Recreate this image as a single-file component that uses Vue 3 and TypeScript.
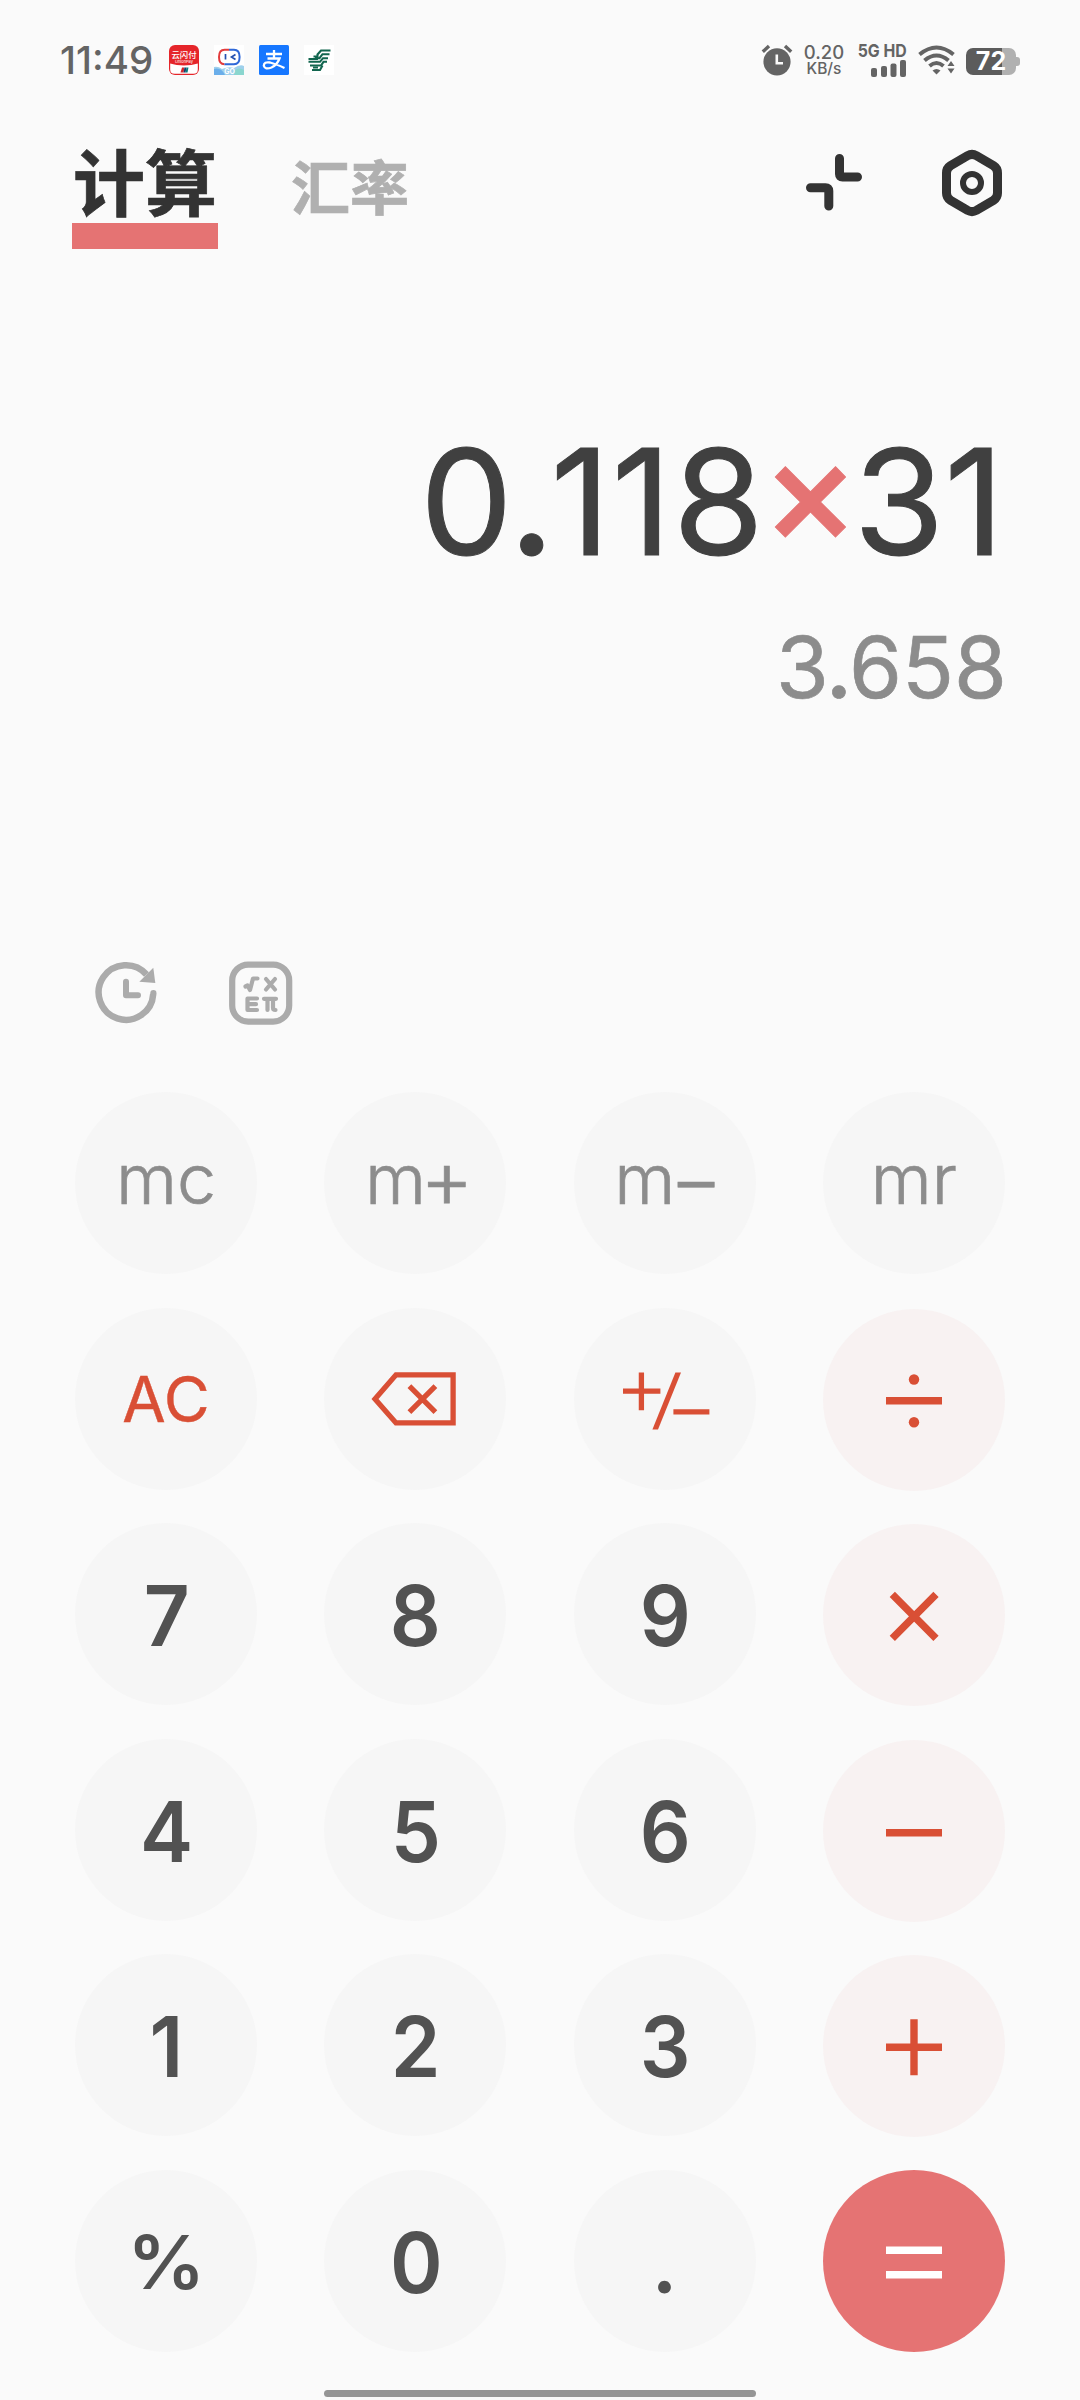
<script setup lang="ts">
type KeyKind = 'memory' | 'clear' | 'digit' | 'percent' | 'point' | 'icon'

interface Key {
  id: string
  kind: KeyKind
  label?: string
  sign?: string
  tone?: 'operator' | 'equals'
}

const keys: Key[] = [
  { id: 'mc', kind: 'memory', label: 'mc' },
  { id: 'm+', kind: 'memory', label: 'm', sign: '+' },
  { id: 'm-', kind: 'memory', label: 'm', sign: '−' },
  { id: 'mr', kind: 'memory', label: 'mr' },
  { id: 'ac', kind: 'clear', label: 'AC' },
  { id: 'backspace', kind: 'icon' },
  { id: 'sign', kind: 'icon' },
  { id: 'divide', kind: 'icon', tone: 'operator' },
  { id: '7', kind: 'digit', label: '7' },
  { id: '8', kind: 'digit', label: '8' },
  { id: '9', kind: 'digit', label: '9' },
  { id: 'multiply', kind: 'icon', tone: 'operator' },
  { id: '4', kind: 'digit', label: '4' },
  { id: '5', kind: 'digit', label: '5' },
  { id: '6', kind: 'digit', label: '6' },
  { id: 'minus', kind: 'icon', tone: 'operator' },
  { id: '1', kind: 'digit', label: '1' },
  { id: '2', kind: 'digit', label: '2' },
  { id: '3', kind: 'digit', label: '3' },
  { id: 'plus', kind: 'icon', tone: 'operator' },
  { id: 'percent', kind: 'percent', label: '%' },
  { id: '0', kind: 'digit', label: '0' },
  { id: 'point', kind: 'point', label: '.' },
  { id: 'equals', kind: 'icon', tone: 'equals' },
]

/* Stroke paths inside a 182 x 182 key */
const iconPaths: Record<string, string> = {
  backspace: 'M72 66.8H129.1V114.9H72L51 91ZM85.4 78.2L111.4 104.2M111.4 78.2L85.4 104.2',
  sign: 'M49 83.2H86.4M67.4 64.5V102.2M99.4 103.8H135.4',
  divide: 'M63 91.8H119',
  multiply: 'M69.3 70.4L113 114.4M113 70.4L69.3 114.4',
  minus: 'M63 92.7H119',
  plus: 'M63 92.3H119M91 64.3V120.3',
  equals: 'M63 80.2H119M63 104.8H119',
}
</script>

<template>
  <div class="phone">
    <header class="status">
      <span class="clock">11:49</span>
      <div class="apps">
        <svg width="30" height="30" viewBox="0 0 30 30">
          <rect width="30" height="30" rx="6" fill="#e5252a" />
          <path d="M1.2 18.5C9 21 21 21 28.8 18.5V24.5Q28.8 28.8 24.5 28.8H5.5Q1.2 28.8 1.2 24.5Z" fill="#fff" />
          <path d="M13 22.5H15.5L14.5 27.5H11.5Z" fill="#d3272d" />
          <path d="M15.5 22.5H17.5L16.5 27.5H14.5Z" fill="#123f6d" />
          <path d="M17.5 22.5H19.5L18.5 27.5H16.5Z" fill="#0a7d80" />
          <text x="15" y="12.5" text-anchor="middle" font-size="8.4" font-weight="500" fill="#fff" class="cjk">云闪付</text>
          <text x="15" y="18" text-anchor="middle" font-size="4" fill="#fff">UnionPay</text>
        </svg>
        <svg width="30" height="30" viewBox="0 0 30 30">
          <rect width="30" height="30" fill="#fff" />
          <path d="M0 22Q4 21 8 24Q15 21 20 23Q26 19 30 21V30H0Z" fill="#9fd0ec" />
          <path d="M0 24Q7 22 11 30H0Z" fill="#6aaeea" />
          <path d="M21 25Q25 22 30 25V30H20Z" fill="#8ad6cf" />
          <path d="M15 4.8H10.5Q5 4.8 5 12T10.5 19.2" fill="none" stroke="#e33c3d" stroke-width="2" />
          <path d="M15 4.8H20Q25.6 4.8 25.6 12T20 19.2H10.5" fill="none" stroke="#2f68d8" stroke-width="2" />
          <path d="M11.5 9V14.5M21.5 9.5L17.5 12L21.5 14.5" fill="none" stroke="#2450b0" stroke-width="1.7" />
          <text x="15.5" y="29" text-anchor="middle" font-size="7" font-weight="700" fill="#fff">GO</text>
        </svg>
        <svg width="30" height="30" viewBox="0 0 30 30">
          <rect width="30" height="30" rx="1.5" fill="#1677ff" />
          <path d="M7 9H23M15 5V13.5M8.5 13.5H20.5Q18 20 12.5 22.5Q6 25 4.8 20.8Q5 16.5 11 17.5Q17 19 25.5 23" fill="none" stroke="#fff" stroke-width="2.3" />
        </svg>
        <svg width="30" height="30" viewBox="0 0 30 30">
          <rect width="30" height="30" fill="#fff" />
          <g fill="none" stroke="#12664f" stroke-width="2.1">
            <path d="M26.5 5.5H17L13.5 9.5V11.5H9.5M25.5 9.2H18.5L15.5 13.2H11" />
            <path d="M24 13.2H19L16 16.8H4.5M23 16.8H19.5L17 20.5H6" />
            <path d="M4.5 14H14M18.5 20.5L16 25H8M9 22.5H14" />
          </g>
        </svg>
      </div>
      <div class="system">
        <svg class="alarm" width="32" height="32" viewBox="0 0 32 32">
          <circle cx="16" cy="17.8" r="13.6" fill="#646464" />
          <path d="M1.8 7.8L8 2M30.2 7.8L24 2" stroke="#646464" stroke-width="3.4" />
          <path d="M15.8 10.5V19.3H22" fill="none" stroke="#fafafa" stroke-width="2.6" />
        </svg>
        <div class="speed"><b>0.20</b><i>KB/s</i></div>
        <div class="cell">
          <span class="net">5G HD</span>
          <svg width="36" height="17" viewBox="0 0 36 17" fill="#646464">
            <rect x="0" y="8" width="6" height="9" rx="2" />
            <rect x="10" y="6" width="6" height="11" rx="2" />
            <rect x="19.5" y="3.5" width="6" height="13.5" rx="2" />
            <rect x="29" y="0" width="6" height="17" rx="2" />
          </svg>
        </div>
        <svg class="wifi" width="38" height="30" viewBox="0 0 38 30">
          <g fill="none" stroke="#646464" stroke-width="4">
            <path d="M1.5 9.5Q18.5 -4.5 35.5 9.5" />
            <path d="M6.5 15.5Q18.5 5.5 30.5 15.5" />
            <path d="M11.5 21Q18.5 15 25.5 21" />
          </g>
          <path d="M14.5 25.5Q18.5 22.5 22.5 25.5L18.5 29.5Z" fill="#646464" />
          <path d="M27 20.5V27H37V20.5L33 14Z" fill="#fafafa" />
          <path d="M29.5 21L33 16L36.5 21ZM29.5 23.5H36.5L33 28.5Z" fill="#646464" />
        </svg>
        <div class="battery"><span>72</span></div>
      </div>
    </header>

    <nav class="tabs">
      <div class="tab active"><span>计算</span></div>
      <div class="tab">汇率</div>
      <svg class="shrink" width="58" height="58" viewBox="0 0 58 58" fill="none" stroke="#333" stroke-width="9" stroke-linecap="round">
        <path d="M34.5 5.5V21Q34.5 24 37.5 24H52.5" />
        <path d="M5.5 34.8H20.5Q23.8 34.8 23.8 38V53" />
      </svg>
      <svg class="settings" width="62" height="68" viewBox="0 0 62 68" fill="none" stroke="#333">
        <path d="M26.6 6.6Q31 4.2 35.4 6.6L52.4 16.6Q56.5 19.2 56.5 24V44Q56.5 48.8 52.4 51.4L35.4 61.4Q31 63.8 26.6 61.4L9.6 51.4Q5.5 48.8 5.5 44V24Q5.5 19.2 9.6 16.6Z" stroke-width="9" />
        <circle cx="31" cy="34" r="9" stroke-width="6" />
      </svg>
    </nav>

    <section class="display">
      <div class="expression"><span class="left">0<em>.</em>118</span><span class="op">×</span><span>31</span></div>
      <div class="result">3<em>.</em>658</div>
    </section>

    <div class="tools">
      <svg width="64" height="64" viewBox="0 0 64 64" fill="none" stroke="#ababab">
        <path d="M58.2 33.2A27.3 27.3 0 1 1 51.5 13.5" stroke-width="6.5" />
        <circle cx="58.4" cy="32.2" r="3.1" fill="#ababab" stroke="none" />
        <path d="M31 20.7V34.3H43" stroke-width="6" stroke-linejoin="round" stroke-linecap="round" />
        <path d="M58.3 6.7L60.3 22L44.3 20.7Z" fill="#ababab" stroke="none" />
      </svg>
      <svg width="64" height="64" viewBox="0 0 64 64" fill="none" stroke="#ababab">
        <rect x="3.2" y="3.6" width="57" height="57" rx="16" stroke-width="6.2" />
        <g stroke-width="4.2" stroke-linecap="round" stroke-linejoin="round">
          <path d="M16.5 25.5L18.5 24.5L21 29L24 17.5H28.5" />
          <path d="M37 18L46 28.5M46 18L37 28.5" />
          <path d="M28 37.5H18.5V49H28M18.5 43.2H27" />
          <path d="M35 37.8H47M38.5 38V49M44 38V46.5Q44 49 46.5 49" />
        </g>
      </svg>
    </div>

    <main class="pad">
      <button v-for="k in keys" :key="k.id" class="key" :class="[k.kind, k.tone]" :aria-label="k.id">
        <span v-if="k.label" class="label" :class="{ signed: k.sign }">{{ k.label }}<span v-if="k.sign" class="sign">{{ k.sign }}</span></span>
        <svg v-else width="182" height="182" viewBox="0 0 182 182" fill="none" stroke="currentColor" :stroke-width="k.tone ? 7.4 : 5.3">
          <path :d="iconPaths[k.id]" />
          <path v-if="k.id === 'sign'" d="M101.4 64.5H107L84 121.5H78.4Z" fill="currentColor" stroke="none" />
          <g v-if="k.id === 'divide'" fill="currentColor" stroke="none">
            <circle cx="91" cy="70.5" r="5.2" />
            <circle cx="91" cy="113.2" r="5.2" />
          </g>
        </svg>
      </button>
    </main>
    <div class="home-bar"></div>
  </div>
</template>

<style>
html,
body {
  margin: 0;
  background: #fafafa;
}
</style>

<style scoped>
.phone {
  box-sizing: border-box;
  width: 1080px;
  height: 2400px;
  overflow: hidden;
  display: flex;
  flex-direction: column;
  background: #fafafa;
  font-family: Inter, "Noto Sans CJK SC", sans-serif;
}
.cjk {
  font-family: "Noto Sans CJK SC", sans-serif;
}
.status {
  height: 120px;
  display: flex;
  align-items: center;
  padding: 0 60px;
  box-sizing: border-box;
  color: #646464;
}
.clock {
  width: 109px;
  font-size: 38.5px;
  font-weight: 500;
  white-space: nowrap;
}
.apps {
  display: flex;
  gap: 15px;
}
.system {
  margin-left: auto;
  display: flex;
  align-items: center;
}
.speed {
  width: 40px;
  margin-left: 11px;
  display: flex;
  flex-direction: column;
  align-items: center;
}
.speed b {
  font-size: 18.5px;
  font-weight: 500;
  line-height: 17px;
}
.speed i {
  font-style: normal;
  font-size: 15.5px;
  font-weight: 500;
  line-height: 15px;
}
.cell {
  width: 50px;
  margin-left: 13px;
  display: flex;
  flex-direction: column;
  align-items: flex-end;
  gap: 2px;
}
.net {
  font-size: 18px;
  line-height: 15px;
  font-weight: 700;
  white-space: nowrap;
  transform: scaleX(0.88);
  transform-origin: right;
}
.wifi {
  margin-left: 11px;
}
.battery {
  width: 50px;
  height: 27px;
  margin: 3px 4px 0 10px;
  border-radius: 7px;
  background: linear-gradient(90deg, #5c5c5c 72%, #b0b0b0 72%);
  position: relative;
  color: #fff;
  font-size: 25px;
  font-weight: 700;
  line-height: 27px;
  text-align: center;
}
.battery::after {
  content: "";
  position: absolute;
  right: -4px;
  top: 9px;
  width: 4px;
  height: 9px;
  border-radius: 0 3px 3px 0;
  background: #b0b0b0;
}
.tabs {
  height: 140px;
  display: flex;
  align-items: flex-start;
  padding: 0 77px 0 72px;
}
.tab {
  font-family: "Noto Sans CJK SC", sans-serif;
  font-weight: 700;
  font-size: 59px;
  line-height: 60px;
  color: #b0b0b0;
  -webkit-text-stroke: 0.7px currentColor;
  margin: 35px 0 0 73px;
}
.tab.active {
  width: 146px;
  height: 77px;
  margin: 26px 0 0;
  font-size: 72px;
  line-height: 65px;
  text-align: center;
  color: #333;
  border-bottom: 26px solid #e57373;
}
.shrink {
  margin: 33px 78px 0 auto;
}
.settings {
  margin-top: 29px;
}
.display {
  height: 692px;
  box-sizing: border-box;
  padding-top: 142px;
  display: flex;
  flex-direction: column;
  align-items: flex-end;
  padding-right: 76px;
}
.expression {
  height: 200px;
  line-height: 200px;
  font-size: 147px;
  font-weight: 400;
  -webkit-text-stroke: 1px currentColor;
  color: #404040;
  white-space: nowrap;
}
.left {
  letter-spacing: 1.4px;
}
.display em {
  font-family: Lato, sans-serif;
  font-style: normal;
  font-weight: 700;
  line-height: 0;
}
.op {
  display: inline-block;
  line-height: 0;
  margin: 0 -6px 0 -4px;
  color: #e57373;
  font-weight: 500;
  transform: translateY(-11px);
}
.result {
  height: 120px;
  line-height: 120px;
  margin: 5px -3px 0 0;
  font-size: 85.5px;
  font-weight: 400;
  -webkit-text-stroke: 0.7px currentColor;
  color: #8c8c8c;
  white-space: nowrap;
}
.tools {
  height: 140px;
  display: flex;
  align-items: flex-start;
  gap: 70px;
  padding: 9px 0 0 95px;
  box-sizing: border-box;
}
.pad {
  display: grid;
  grid-template-columns: repeat(4, 182px);
  grid-auto-rows: 182px;
  column-gap: 67.3px;
  row-gap: 33.5px;
  padding-left: 75px;
}
.key {
  border: 0;
  padding: 0;
  border-radius: 50%;
  background: #f6f6f6;
  color: #d94f35;
  font-family: inherit;
  display: flex;
  align-items: center;
  justify-content: center;
}
.key.digit,
.key.percent,
.key.point {
  color: #525252;
}
.digit .label {
  font-size: 84px;
  font-weight: 600;
  padding-top: 3px;
  transform: translateX(0.5px) scaleX(0.95);
}
.percent .label {
  font-size: 74px;
  font-weight: 600;
  padding-top: 2px;
  transform: scaleX(1.05);
}
.point .label {
  font-family: Lato, sans-serif;
  font-size: 84px;
  font-weight: 700;
}
.memory {
  color: #8c8c8c;
}
.memory .label {
  font-size: 70px;
  font-weight: 300;
  -webkit-text-stroke: 0.7px currentColor;
  padding-bottom: 10px;
}
.memory .signed {
  padding-left: 8px;
}
.memory .sign {
  display: inline-block;
  font-size: 82px;
  line-height: 0;
  margin-left: -6px;
  transform: translateY(4px);
}
.clear .label {
  font-size: 63px;
  font-weight: 400;
  -webkit-text-stroke: 0.4px currentColor;
}
.key.operator {
  background: #f8f2f2;
  transform: translateY(1px);
}
.key.equals {
  background: #e57373;
  color: #fff;
}
.home-bar {
  width: 432px;
  height: 7px;
  margin: 38px auto 0;
  border-radius: 4px;
  background: #959595;
}
</style>
